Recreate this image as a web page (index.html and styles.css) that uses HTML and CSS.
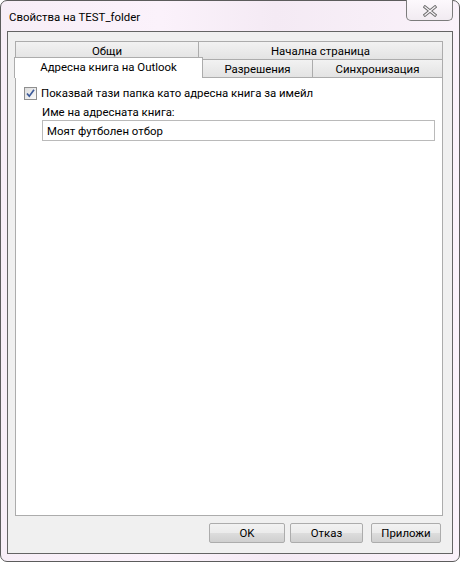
FILE: index.html
```html
<html>
<head>
	<title>Свойства на TEST_folder</title>
	<meta http-equiv="Content-Type" content="text/html; charset=utf-8" />
	<link rel="stylesheet" href="styles.css">
</head>
<body>
	<div class="window">
		<div class="titlebar">
			<label class="caption">Свойства на TEST_folder</label>
			<div class="close">
				<svg width="14" height="12" viewBox="0 0 14 12">
					<path d="M2 2 L12 10 M12 2 L2 10" stroke="#6d6d6d" stroke-width="3.2" stroke-linecap="square" fill="none"/>
					<path d="M2 2 L12 10 M12 2 L2 10" stroke="#f7f3f7" stroke-width="1.3" stroke-linecap="square" fill="none"/>
				</svg>
			</div>
		</div>
		<div class="client">
			<div class="tabs">
				<div class="tab-row">
					<div class="tab w-general">Общи</div>
					<div class="tab w-home">Начална страница</div>
				</div>
				<div class="tab-row front">
					<div class="tab active w-book">Адресна книга на Outlook</div>
					<div class="tab w-perm">Разрешения</div>
					<div class="tab w-sync">Синхронизация</div>
				</div>
			</div>
			<div class="panel">
				<div class="check-row">
					<span class="checkbox">
						<svg width="11" height="11" viewBox="0 0 11 11">
							<path d="M2 5.5 L4.3 8.2 L9 1.8" stroke="#3c5a9a" stroke-width="1.7" fill="none"/>
						</svg>
					</span>
					<label>Показвай тази папка като адресна книга за имейл</label>
				</div>
				<div class="field">
					<label>Име на адресната книга:</label>
					<input type="text" value="Моят футболен отбор">
				</div>
			</div>
			<div class="buttons">
				<button class="b-ok">OK</button>
				<button class="b-cancel">Отказ</button>
				<button class="b-apply">Приложи</button>
			</div>
		</div>
	</div>
</body>
</html>
```

FILE: styles.css
```css
*{
	margin: 0;
	padding: 0;
	box-sizing: border-box;
}
body{
	background: #ffffff;
	font-family: Roboto, "Noto Sans", sans-serif;
	font-size: 11.4px;
	color: #000;
}
/* outer frame of the dialog */
.window{
	width: 460px;
	height: 562px;
	border: 1px solid #5c5c5c;
	border-radius: 7px;
	background: linear-gradient(90deg, #f7eef7 0%, #fbf2fb 35%, #f4eaf4 60%, #faf2fa 100%);
	display: flex;
	flex-direction: column;
	padding: 0 6px 7px 6px;
}
.titlebar{
	height: 30px;
	display: flex;
	justify-content: space-between;
	align-items: flex-start;
}
.caption{
	margin-top: 9px;
	margin-left: 2px;
	line-height: 15px;
	color: #000;
}
.close{
	width: 47px;
	height: 21px;
	margin-top: -1px;
	border: 1px solid #7c7c7c;
	border-top: none;
	border-radius: 0 0 5px 5px;
	background: linear-gradient(#fdf9fd, #f1ebf1);
	display: flex;
	justify-content: center;
	align-items: center;
	padding-top: 1px;
}
/* grey client area */
.client{
	flex: 1;
	border: 1px solid #646464;
	background: #f0f0f0;
	display: flex;
	flex-direction: column;
	padding: 9px 8px 9px 7px;
}
.tabs{
	display: flex;
	flex-direction: column;
	height: 36px;
}
.tab-row{
	display: flex;
	height: 18px;
}
.tab{
	height: 18px;
	border: 1px solid #acacac;
	border-bottom: none;
	border-right: none;
	background: linear-gradient(#f2f2f2, #e3e3e3);
	text-align: center;
	line-height: 18px;
	white-space: nowrap;
}
.tab:last-child{
	border-right: 1px solid #acacac;
}
.front{
	align-items: flex-end;
	position: relative;
	z-index: 1;
}
.tab.active{
	height: 21px;
	background: #ffffff;
	border-right: 1px solid #acacac;
	margin-left: -1px;
	margin-bottom: -1px;
	line-height: 19px;
	padding-bottom: 2px;
}
.w-general{ width: 183px; }
.w-home{ width: 245px; }
.w-book{ width: 189px; }
.w-perm{ width: 109px; border-left: none; }
.w-sync{ width: 131px; }
.panel{
	height: 439px;
	width: 428px;
	border: 1px solid #acacac;
	background: #ffffff;
	padding: 9px 8px 0 8px;
}
.check-row{
	display: flex;
	align-items: center;
	height: 13px;
	line-height: 13px;
}
.checkbox{
	width: 13px;
	height: 13px;
	border: 1px solid #8f8f8f;
	background: linear-gradient(135deg, #dcdcdc, #fbfbfb);
	display: flex;
	justify-content: center;
	align-items: center;
	margin-right: 4px;
}
.field{
	display: flex;
	flex-direction: column;
	margin-left: 18px;
	margin-top: 5px;
}
.field > label{
	height: 15px;
	line-height: 15px;
}
.field > input{
	margin-top: 0;
	width: 393px;
	height: 21px;
	border: 1px solid #bababa;
	background: #ffffff;
	font-family: inherit;
	font-size: 11.4px;
	padding: 0 4px;
	outline: none;
}
.buttons{
	display: flex;
	justify-content: flex-end;
	margin-top: 7px;
	padding-right: 3px;
	gap: 5px;
}
.buttons > button{
	height: 20px;
	border: 1px solid #acacac;
	border-radius: 2px;
	background: linear-gradient(#f2f2f2 0%, #ebebeb 50%, #dddddd 51%, #cfcfcf 100%);
	font-family: inherit;
	font-size: 11.4px;
	color: #000;
}
.b-ok{ width: 76px; }
.b-cancel{ width: 73px; margin-right: 3px; }
.b-apply{ width: 70px; }
```
